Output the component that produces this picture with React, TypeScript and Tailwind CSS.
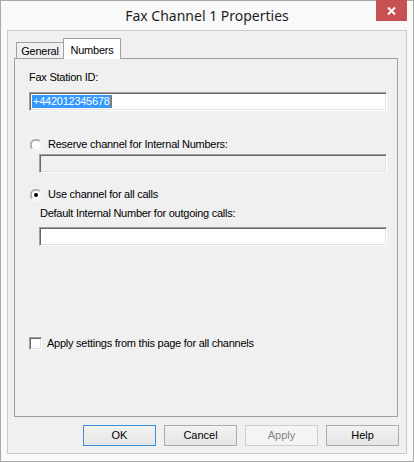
const sunken =
  'border border-t-[#a0a0a0] border-l-[#a0a0a0] border-r-white border-b-white shadow-[inset_1px_1px_0_#696969,inset_-1px_-1px_0_#e3e3e3]';

const Radio = ({ checked }: { checked?: boolean }) => (
  <svg width="12" height="12" viewBox="0 0 12 12" className="shrink-0">
    <circle cx="6" cy="6" r="5.5" fill="#ffffff" />
    <path d="M1.8 10.2 A5.5 5.5 0 0 1 10.2 1.8" fill="none" stroke="#b4b4b4" strokeWidth="1" />
    <path d="M10.2 1.8 A5.5 5.5 0 0 1 1.8 10.2" fill="none" stroke="#ffffff" strokeWidth="1" />
    <path d="M2.5 9.5 A4.5 4.5 0 0 1 9.5 2.5" fill="none" stroke="#8a8a8a" strokeWidth="1" />
    <path d="M9.5 2.5 A4.5 4.5 0 0 1 2.5 9.5" fill="none" stroke="#e8e8e8" strokeWidth="1" />
    {checked && <circle cx="6" cy="6" r="2" fill="#000000" />}
  </svg>
);

const Btn = ({ label, variant }: { label: string; variant?: 'default' | 'disabled' }) => (
  <button
    type="button"
    className={
      variant === 'default'
        ? 'h-[21px] w-[73px] border border-[#3c8fe0] bg-gradient-to-b from-[#f2f2f2] to-[#e5e5e5] text-[11px] text-black'
        : variant === 'disabled'
          ? 'h-[21px] w-[73px] border border-[#cfcfcf] bg-[#f4f4f4] text-[11px] text-[#838383]'
          : 'h-[21px] w-[73px] border border-[#acacac] bg-gradient-to-b from-[#f2f2f2] to-[#e5e5e5] text-[11px] text-black'
    }
  >
    {label}
  </button>
);

export default function App() {
  return (
    <div className="flex h-[462px] w-[414px] flex-col border border-[#a9a9a9] bg-[#f9f9f9] font-['Liberation_Sans',Arial,sans-serif]">
      {/* title bar */}
      <div className="relative flex h-[29px] shrink-0 items-center justify-center">
        <span className="font-['Noto_Sans',sans-serif] text-[14px] text-[#1e1e1e]">Fax Channel 1 Properties</span>
        <div className="absolute right-[6px] top-[-1px] flex h-[21px] w-[31px] items-center justify-center bg-[#c75050]">
          <svg width="9" height="8" viewBox="0 0 9 8">
            <path d="M1 0.5 L8 7.5 M8 0.5 L1 7.5" stroke="#ffffff" strokeWidth="2" />
          </svg>
        </div>
      </div>

      {/* client area */}
      <div className="mx-[6px] flex h-[424px] flex-col border border-[#c9c9c9] bg-[#f0f0f0] pl-[6px] pr-[8px] pt-[7px]">
        {/* tabs */}
        <div className="flex h-[20px] items-end pl-[2px] text-[11px] tracking-[-0.25px] text-black">
          <div className="flex h-[16px] w-[48px] items-center justify-center border border-b-0 border-[#a0a0a0] bg-[#f0f0f0] pt-[2px]">
            General
          </div>
          <div className="relative z-10 -mb-px -ml-px flex h-[21px] w-[58px] items-start justify-center border border-b-0 border-[#a0a0a0] bg-white pt-[3px]">
            Numbers
          </div>
        </div>

        {/* tab panel */}
        <div className="flex h-[359px] w-[384px] flex-col border border-[#a0a0a0] bg-[#f0f0f0] pl-[14px] pr-[10px] text-[11px] leading-[13px] tracking-[-0.25px] text-black">
          <div className="mt-[12px]">Fax Station ID:</div>
          <div className={`mt-[8px] flex h-[19px] items-center bg-white pl-[2px] ${sunken}`}>
            <span className="bg-[#3399ff] px-px text-white">+442012345678</span>
            <span className="h-[13px] w-px bg-[#cc6600]" />
          </div>

          <div className="mt-[27px] flex h-[13px] items-center gap-[6px] pl-px">
            <Radio />
            <span>Reserve channel for Internal Numbers:</span>
          </div>
          <div className={`ml-[10px] mt-[3px] h-[19px] bg-[#f0f0f0] ${sunken}`} />

          <div className="mt-[15px] flex h-[13px] items-center gap-[6px] pl-px">
            <Radio checked />
            <span>Use channel for all calls</span>
          </div>
          <div className="ml-[11px] mt-[6px]">Default Internal Number for outgoing calls:</div>
          <div className={`ml-[10px] mt-[7px] h-[19px] bg-white ${sunken}`} />

          <div className="mt-[91px] flex h-[13px] items-center gap-[5px]">
            <div className={`h-[13px] w-[13px] shrink-0 bg-white ${sunken}`} />
            <span>Apply settings from this page for all channels</span>
          </div>
        </div>

        {/* buttons */}
        <div className="-mr-px mt-[8px] flex w-[385px] justify-end gap-[8px]">
          <Btn label="OK" variant="default" />
          <Btn label="Cancel" />
          <Btn label="Apply" variant="disabled" />
          <Btn label="Help" />
        </div>
      </div>
    </div>
  );
}
